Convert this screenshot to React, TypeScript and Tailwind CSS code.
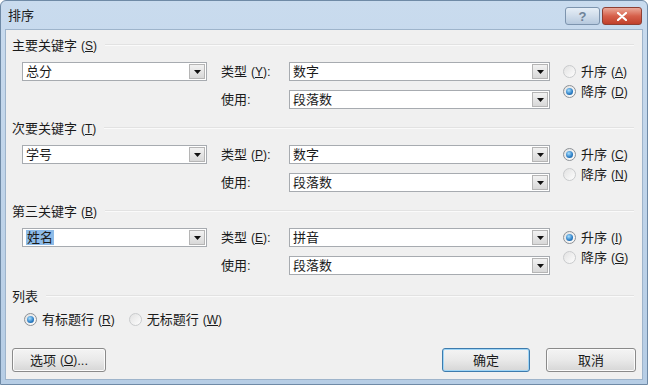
import React from "react";

const FONT = "font-['Liberation_Sans','Noto_Sans_CJK_SC',sans-serif]";

function Arrow() {
  return (
    <svg width="7" height="4" viewBox="0 0 7 4">
      <path d="M0 0 H7 L3.5 4 Z" fill="#111" />
    </svg>
  );
}

function Combo({
  value,
  widthClass,
  highlight,
}: {
  value: string;
  widthClass: string;
  highlight?: boolean;
}) {
  return (
    <div
      className={`flex h-[19px] items-stretch border border-[#a7abb0] bg-white ${widthClass}`}
    >
      <div className="flex flex-1 items-center pl-[3px] text-[13px] leading-none text-[#1b1b1b]">
        {highlight ? (
          <span className="bg-[#8dbbe8] px-[1px] py-[1px]">{value}</span>
        ) : (
          <span>{value}</span>
        )}
      </div>
      <div className="m-[1px] flex w-[16px] items-center justify-center border border-[#b5b5b5] bg-gradient-to-b from-[#f2f2f2] to-[#d8d8d8]">
        <Arrow />
      </div>
    </div>
  );
}

function Radio({ checked }: { checked?: boolean }) {
  return (
    <span
      className={`flex h-[13px] w-[13px] shrink-0 items-center justify-center rounded-full border ${
        checked ? "border-[#8c9196]" : "border-[#c9cbcd]"
      } bg-gradient-to-br from-[#e2e2e2] to-[#fdfdfd]`}
    >
      {checked && (
        <span className="h-[7px] w-[7px] rounded-full bg-[radial-gradient(circle_at_40%_35%,#a8e0ff,#2a7cc4_60%,#14558f)]" />
      )}
    </span>
  );
}

function Acc({ ch }: { ch: string }) {
  return (
    <span className="ml-[4px] text-[12px]">
      (<span className="underline underline-offset-1">{ch}</span>)
    </span>
  );
}

function RadioLabel({
  checked,
  text,
  ch,
}: {
  checked?: boolean;
  text: string;
  ch: string;
}) {
  return (
    <div className="flex h-[16px] items-center">
      <Radio checked={checked} />
      <span className="ml-[5px] text-[13px] leading-none text-[#1b1b1b]">
        {text}
        <Acc ch={ch} />
      </span>
    </div>
  );
}

function Header({ text, ch }: { text: string; ch?: string }) {
  return (
    <div className="flex h-[18px] items-center pl-[6px] pr-[8px]">
      <span className="text-[13px] leading-none text-[#1b1b1b]">
        {text}
        {ch && <Acc ch={ch} />}
      </span>
      <div className="ml-[8px] h-[2px] flex-1 border-t border-b border-t-[#e2e2e2] border-b-[#fafafa]" />
    </div>
  );
}

function Section({
  title,
  titleCh,
  key1,
  highlight,
  typeCh,
  typeVal,
  ascCh,
  descCh,
  asc,
}: {
  title: string;
  titleCh: string;
  key1: string;
  highlight?: boolean;
  typeCh: string;
  typeVal: string;
  ascCh: string;
  descCh: string;
  asc: boolean;
}) {
  return (
    <div className="flex flex-col">
      <Header text={title} ch={titleCh} />
      <div className="mt-[8px] flex pl-[16px]">
        <div className="flex flex-col gap-[9px]">
          <div className="flex items-center">
            <Combo value={key1} widthClass="w-[185px]" highlight={highlight} />
            <span className="ml-[14px] w-[68px] text-[13px] leading-none text-[#1b1b1b]">
              类型<Acc ch={typeCh} />:
            </span>
            <Combo value={typeVal} widthClass="w-[261px]" />
          </div>
          <div className="flex items-center">
            <div className="w-[199px]" />
            <span className="w-[68px] text-[13px] leading-none text-[#1b1b1b]">
              使用:
            </span>
            <Combo value="段落数" widthClass="w-[261px]" />
          </div>
        </div>
        <div className="ml-[13px] flex flex-col gap-[4px] pt-[1px]">
          <RadioLabel checked={asc} text="升序" ch={ascCh} />
          <RadioLabel checked={!asc} text="降序" ch={descCh} />
        </div>
      </div>
    </div>
  );
}

function Btn({
  children,
  widthClass,
  def,
}: {
  children: React.ReactNode;
  widthClass: string;
  def?: boolean;
}) {
  return (
    <div
      className={`flex h-[24px] items-center justify-center rounded-[3px] border ${
        def
          ? "border-[#3d7bad] shadow-[inset_0_0_0_1px_#9fd5f6]"
          : "border-[#8a8a8a] shadow-[inset_0_0_0_1px_#fbfbfb]"
      } bg-gradient-to-b from-[#f4f4f4] via-[#e9e9e9] to-[#d6d6d6] text-[13px] leading-none text-[#1b1b1b] ${widthClass}`}
    >
      {children}
    </div>
  );
}

export default function App() {
  return (
    <div
      className={`flex h-[385px] w-[648px] flex-col overflow-hidden rounded-t-[6px] border border-[#6f8aa6] bg-gradient-to-b from-[#c9dbee] to-[#b6cde5] ${FONT}`}
    >
      {/* Title bar */}
      <div className="flex h-[28px] shrink-0 items-center pl-[7px] pr-[5px]">
        <span className="text-[13px] leading-none text-[#1b1b1b]">排序</span>
        <div className="ml-auto flex items-center gap-[2px] pt-[2px]">
          <div className="flex h-[18px] w-[35px] items-center justify-center rounded-[3px] border border-[#7d94ae] bg-gradient-to-b from-[#e6eef7] via-[#cfdcea] to-[#b6c9de] text-[13px] font-bold leading-none text-[#6f8299]">
            ?
          </div>
          <div className="flex h-[18px] w-[40px] items-center justify-center rounded-[3px] border border-[#8e3f33] bg-gradient-to-b from-[#eaa899] via-[#d6604b] to-[#c03f2b]">
            <svg width="10" height="9" viewBox="0 0 10 9">
              <path
                d="M1 1 L9 8 M9 1 L1 8"
                stroke="#ffffff"
                strokeWidth="2.2"
                strokeLinecap="round"
              />
            </svg>
          </div>
        </div>
      </div>
      {/* Client */}
      <div className="mx-[4px] mb-[4px] flex flex-1 flex-col border border-[#9eb4cb] bg-[#f0f0f0] pt-[6px]">
        <Section
          title="主要关键字"
          titleCh="S"
          key1="总分"
          typeCh="Y"
          typeVal="数字"
          ascCh="A"
          descCh="D"
          asc={false}
        />
        <div className="mt-[10px]">
          <Section
            title="次要关键字"
            titleCh="T"
            key1="学号"
            typeCh="P"
            typeVal="数字"
            ascCh="C"
            descCh="N"
            asc={true}
          />
        </div>
        <div className="mt-[10px]">
          <Section
            title="第三关键字"
            titleCh="B"
            key1="姓名"
            highlight
            typeCh="E"
            typeVal="拼音"
            ascCh="I"
            descCh="G"
            asc={true}
          />
        </div>
        <div className="mt-[12px]">
          <Header text="列表" />
        </div>
        <div className="mt-[6px] flex items-center gap-[14px] pl-[18px]">
          <RadioLabel checked text="有标题行" ch="R" />
          <RadioLabel text="无标题行" ch="W" />
        </div>
        <div className="mt-[21px] flex items-center pl-[6px] pr-[6px]">
          <Btn widthClass="w-[94px]">
            选项<Acc ch="O" />...
          </Btn>
          <div className="ml-auto flex gap-[16px]">
            <Btn widthClass="w-[88px]" def>
              确定
            </Btn>
            <Btn widthClass="w-[90px]">取消</Btn>
          </div>
        </div>
      </div>
    </div>
  );
}
